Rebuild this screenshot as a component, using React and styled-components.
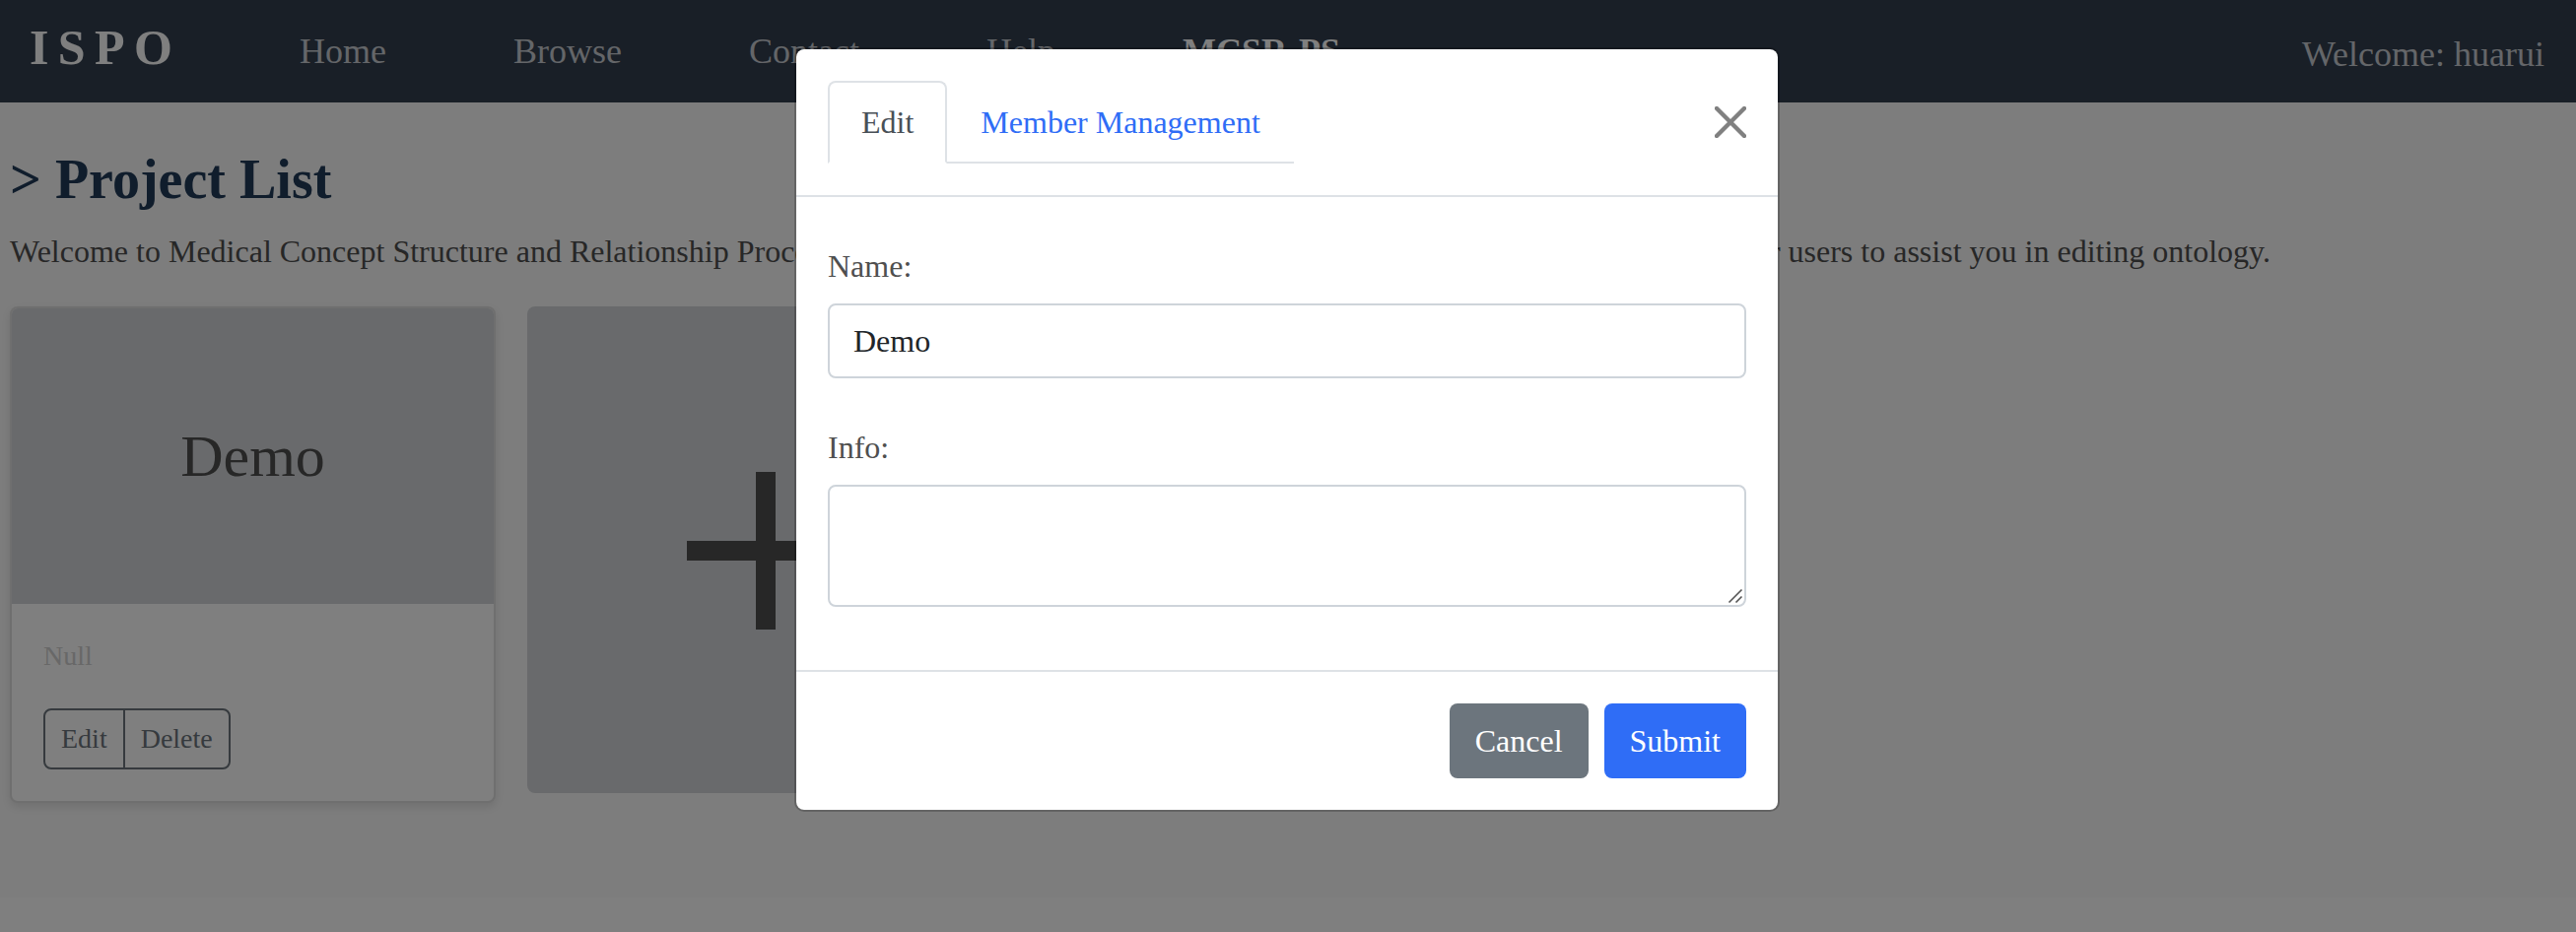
import React from 'react';
import styled, { createGlobalStyle, css } from 'styled-components';

const Global = createGlobalStyle`
  *, *::before, *::after { box-sizing: border-box; }
  html, body { margin: 0; padding: 0; background: #fff; overflow: hidden; }
  body, button, input, textarea { font-family: "Liberation Serif", "Times New Roman", serif; }
  body { font-size: 32px; line-height: 48px; color: #4f4f4f; }
`;

const Page = styled.div`
  height: 946px;
  width: 2614px;
  overflow: hidden;
`;

const Surface = styled.div`
  height: 911px;
  background: #fafafa;
`;

const Navbar = styled.header`
  height: 104px;
  padding: 0 32px 0 30px;
  display: flex;
  align-items: center;
  justify-content: space-between;
  background: #333f4f;
`;

const NavStart = styled.div`
  display: flex;
  align-items: center;
`;

const Brand = styled.div`
  width: 274px;
  padding-bottom: 9px;
  font-size: 50px;
  font-weight: 700;
  letter-spacing: 9.4px;
  color: #fff;
`;

const NavLinks = styled.nav`
  display: flex;
  gap: 129px;
`;

const NavLink = styled.a`
  font-size: 36px;
  color: ${(p) => (p.$current ? '#fff' : '#c8ccd2')};
  font-weight: ${(p) => (p.$current ? 700 : 400)};
`;

const Welcome = styled.div`
  font-size: 36px;
  padding-top: 6px;
  color: #c8ccd2;
`;

const Main = styled.main`
  padding: 40px 10px 0;
`;

const Title = styled.h1`
  margin: 0;
  font-size: 56px;
  line-height: 76px;
  font-weight: 700;
  color: #203a58;
`;

const Intro = styled.p`
  margin: 11px 0 32px;
  width: 2294px;
  display: flex;
  justify-content: space-between;
  white-space: nowrap;
`;

const Cards = styled.div`
  display: flex;
  align-items: flex-start;
  gap: 32px;
`;

const Card = styled.article`
  width: 493px;
  height: 504px;
  border: 2px solid rgba(0, 0, 0, 0.125);
  border-radius: 8px;
  background: #fff;
  box-shadow: 0 4px 8px rgba(0, 0, 0, 0.1);
  overflow: hidden;
`;

const CardCover = styled.div`
  height: 300px;
  display: flex;
  align-items: center;
  justify-content: center;
  background: #d3d5d8;
  font-size: 60px;
`;

const CardBody = styled.div`
  padding: 32px;
`;

const Muted = styled.div`
  font-size: 28px;
  line-height: 42px;
  color: #d0d0d0;
`;

const ButtonGroup = styled.div`
  margin-top: 32px;
  display: inline-flex;
  border: 2px solid #6c757d;
  border-radius: 8px;
`;

const SmallButton = styled.button`
  height: 58px;
  padding: 0 16px;
  border: 0;
  background: transparent;
  font-size: 28px;
  line-height: 42px;
  color: #6c757d;
  & + & { border-left: 2px solid #6c757d; }
`;

const AddCard = styled.div`
  width: 483px;
  height: 494px;
  padding-top: 2px;
  border-radius: 8px;
  display: flex;
  align-items: center;
  justify-content: center;
  background: #d3d5d8;
`;

const Backdrop = styled.div`
  position: absolute;
  inset: 0;
  display: flex;
  justify-content: center;
  align-items: flex-start;
  padding: 48px 2px 0 0;
  background: rgba(0, 0, 0, 0.5);
`;

const Dialog = styled.section`
  width: 1000px;
  border: 2px solid rgba(0, 0, 0, 0.2);
  border-radius: 10px;
  background: #fff;
  background-clip: padding-box;
`;

const DialogHeader = styled.div`
  height: 150px;
  padding: 32px;
  display: flex;
  align-items: center;
  justify-content: space-between;
  border-bottom: 2px solid #dee2e6;
`;

const Tabs = styled.div`
  display: flex;
  border-bottom: 2px solid #dee2e6;
`;

const Tab = styled.button`
  height: 84px;
  margin-bottom: -2px;
  padding: 0 32px;
  border: 2px solid transparent;
  border-radius: 8px 8px 0 0;
  background: transparent;
  font-size: 32px;
  color: #2f6df6;
  ${(p) => p.$active && css`
    color: #495057;
    background: #fff;
    border-color: #dee2e6 #dee2e6 #fff;
  `}
`;

const CloseButton = styled.button`
  display: flex;
  padding: 0;
  border: 0;
  background: transparent;
`;

const DialogBody = styled.div`
  padding: 46px 32px 64px;
  height: 480px;
`;

const Label = styled.label`
  display: block;
  margin-bottom: 14px;
`;

const controlStyle = css`
  display: block;
  width: 100%;
  padding: 0 24px;
  border: 2px solid #ced4da;
  border-radius: 8px;
  background: #fff;
  font-size: 32px;
  color: #212529;
  outline: 0;
`;

const TextInput = styled.input`
  ${controlStyle}
  height: 76px;
  margin-bottom: 46px;
`;

const TextArea = styled.textarea`
  ${controlStyle}
  height: 124px;
  resize: none;
`;

const AreaWrap = styled.div`
  position: relative;
`;

const Grip = styled.svg`
  position: absolute;
  right: 3px;
  bottom: 3px;
`;

const DialogFooter = styled.div`
  height: 142px;
  padding: 0 32px;
  display: flex;
  align-items: center;
  justify-content: flex-end;
  gap: 16px;
  border-top: 2px solid #dee2e6;
`;

const ActionButton = styled.button`
  height: 76px;
  padding: 0 26px;
  border: 0;
  border-radius: 8px;
  font-size: 32px;
  color: #fff;
  background: ${(p) => (p.$primary ? '#2f6df6' : '#6c757d')};
`;

export default function App() {
  return (
    <Page>
      <Global />
      <Surface>
        <Navbar>
          <NavStart>
            <Brand>ISPO</Brand>
            <NavLinks>
              <NavLink>Home</NavLink>
              <NavLink>Browse</NavLink>
              <NavLink>Contact</NavLink>
              <NavLink>Help</NavLink>
              <NavLink $current>MCSR-PS</NavLink>
            </NavLinks>
          </NavStart>
          <Welcome>Welcome: huarui</Welcome>
        </Navbar>
        <Main>
          <Title>&gt; Project List</Title>
          <Intro>
            <span>Welcome to Medical Concept Structure and Relationship Processing System.</span>
            <span>You can invite other users to assist you in editing ontology.</span>
          </Intro>
          <Cards>
            <Card>
              <CardCover>Demo</CardCover>
              <CardBody>
                <Muted>Null</Muted>
                <ButtonGroup>
                  <SmallButton>Edit</SmallButton>
                  <SmallButton>Delete</SmallButton>
                </ButtonGroup>
              </CardBody>
            </Card>
            <AddCard>
              <svg width="160" height="160" viewBox="0 0 160 160">
                <path d="M0 80H160M80 0V160" stroke="#4f4f4f" strokeWidth="20" />
              </svg>
            </AddCard>
          </Cards>
        </Main>
      </Surface>
      <Backdrop>
        <Dialog role="dialog">
          <DialogHeader>
            <Tabs>
              <Tab $active>Edit</Tab>
              <Tab>Member Management</Tab>
            </Tabs>
            <CloseButton aria-label="Close">
              <svg width="32" height="32" viewBox="0 0 32 32">
                <path d="M2 2L30 30M30 2L2 30" stroke="#808080" strokeWidth="4.4" strokeLinecap="round" />
              </svg>
            </CloseButton>
          </DialogHeader>
          <DialogBody>
            <Label>Name:</Label>
            <TextInput defaultValue="Demo" />
            <Label>Info:</Label>
            <AreaWrap>
              <TextArea />
              <Grip width="16" height="16" viewBox="0 0 16 16">
                <path d="M1.5 14.5L14.5 1.5M8.5 14.5L14.5 8.5" stroke="#555" strokeWidth="1.6" />
              </Grip>
            </AreaWrap>
          </DialogBody>
          <DialogFooter>
            <ActionButton>Cancel</ActionButton>
            <ActionButton $primary>Submit</ActionButton>
          </DialogFooter>
        </Dialog>
      </Backdrop>
    </Page>
  );
}
